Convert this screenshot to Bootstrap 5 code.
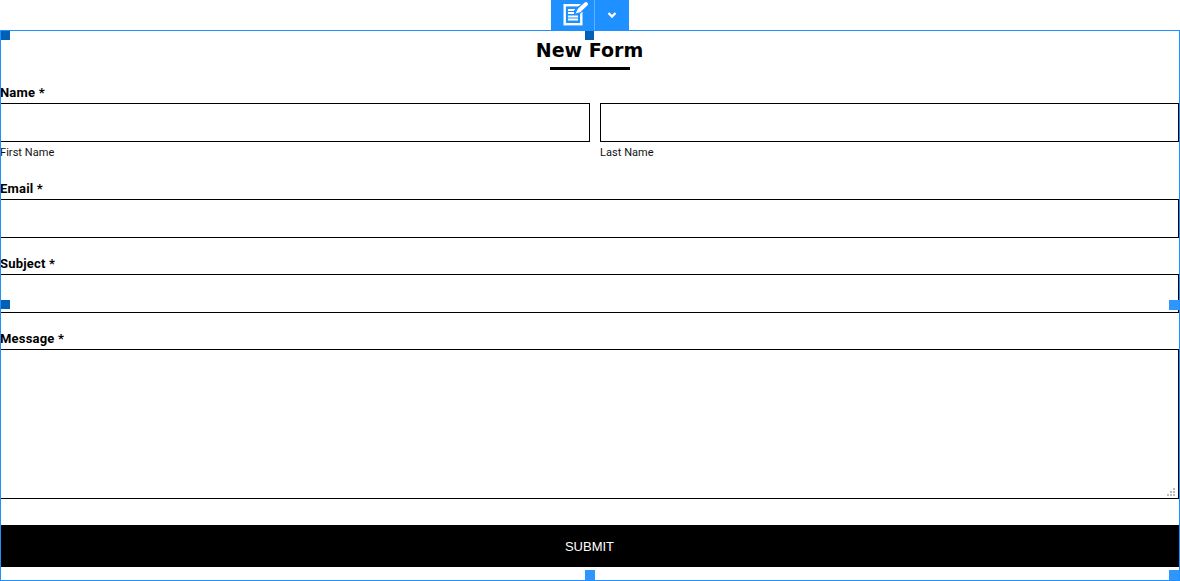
<!DOCTYPE html>
<html lang="en">
<head>
<meta charset="utf-8">
<title>New Form</title>
<link href="https://cdn.jsdelivr.net/npm/bootstrap@5.3.0/dist/css/bootstrap.min.css" rel="stylesheet">
<style>
html,body{height:581px;overflow:hidden;background:#fff}
body{font-family:"Roboto","Liberation Sans",sans-serif;color:#000}
.tool-strip{height:30px}
.tool-btn{height:30px;background:#1e90ff;border:0;padding:0;border-radius:0;display:flex;align-items:center;justify-content:center}
.tool-main{width:44px;border-right:1px solid #62b1ff}
.tool-more{width:34px}
.form-frame{position:relative;height:551px;padding-right:1px}
.form-frame::after{content:"";position:absolute;inset:0;border:1px solid #1e90ff;pointer-events:none}
.form-title{font-family:"DejaVu Sans",sans-serif;font-weight:700;font-size:19px;line-height:26px;margin:0;padding-top:7px}
.title-rule{width:80px;height:3px;background:#000;margin:4px auto 0}
.lbl{display:block;font-size:13px;font-weight:700;line-height:18px;margin:0 0 1px;letter-spacing:.2px}
.sublbl{display:block;font-size:11px;line-height:16px;margin-top:3px;letter-spacing:.05px;color:#111}
.fld{display:block;width:100%;height:39px;border:1px solid #000;border-radius:0;background:#fff;padding:0 8px;outline:0}
.fld-area{height:150px;resize:none}
.area-wrap{position:relative}
.area-grip{position:absolute;right:4px;bottom:3px}
.name-row{margin-top:14px}
.fname{flex:0 0 590px}
.lname{flex:1 1 auto;margin-left:10px}
.mt-email{margin-top:19px}
.mt-sub{margin-top:17px}
.mt-area{margin-top:17px}
.send-btn{display:block;width:100%;height:42px;margin-top:26px;padding:1px 0 0;background:#000;color:#fff;border:0;border-radius:0;font-family:"Liberation Sans",sans-serif;font-size:13px;text-transform:uppercase}
.grip{position:absolute;z-index:2}
.grip-dark{background:#0060b6;width:9px;height:9px}
.grip-light{background:#2f96ff;width:10px;height:10px}
.g-tl{left:1px;top:1px}
.g-tc{left:585px;top:1px}
.g-ml{left:1px;top:270px}
.g-mr{right:1px;top:270px}
.g-bc{left:585px;bottom:1px}
.g-br{right:1px;bottom:1px}
</style>
</head>
<body>
<div class="tool-strip d-flex justify-content-center">
  <button class="tool-btn tool-main" type="button" aria-label="Form">
    <svg width="32" height="30" viewBox="0 0 32 30" fill="none">
      <rect x="7.700" y="5.200" width="16.600" height="19" stroke="#fff" stroke-width="2.400"/>
      <path d="M11 10h7M11 13h6M11 16.500h10M11 19.500h10" stroke="#fff" stroke-width="2"/>
      <path d="M19 13L29 4" stroke="#1e90ff" stroke-width="6.500"/>
      <path d="M22.500 10L29 4" stroke="#fff" stroke-width="4" stroke-linecap="round"/>
      <path d="M18.500 13.500l2.500-4.500 3 3z" fill="#fff"/>
    </svg>
  </button>
  <button class="tool-btn tool-more" type="button" aria-label="More">
    <svg width="10" height="8" viewBox="0 0 10 8" fill="none"><path d="M1.500 2l3.500 3.500L8.500 2" stroke="#fff" stroke-width="2.400"/></svg>
  </button>
</div>
<form class="form-frame">
  <h1 class="form-title text-center">New Form</h1>
  <div class="title-rule"></div>
  <div class="name-row">
    <label class="lbl">Name *</label>
    <div class="d-flex">
      <div class="fname"><input class="fld" type="text"><span class="sublbl">First Name</span></div>
      <div class="lname"><input class="fld" type="text"><span class="sublbl">Last Name</span></div>
    </div>
  </div>
  <div class="mt-email"><label class="lbl">Email *</label><input class="fld" type="email"></div>
  <div class="mt-sub"><label class="lbl">Subject *</label><input class="fld" type="text"></div>
  <div class="mt-area"><label class="lbl">Message *</label>
    <div class="area-wrap">
      <textarea class="fld fld-area"></textarea>
      <svg class="area-grip" width="8" height="8" viewBox="0 0 8 8" fill="#bdbdbd"><rect x="6" y="0" width="2" height="2"/><rect x="3" y="3" width="2" height="2"/><rect x="6" y="3" width="2" height="2"/><rect x="0" y="6" width="2" height="2"/><rect x="3" y="6" width="2" height="2"/><rect x="6" y="6" width="2" height="2"/></svg>
    </div>
  </div>
  <button class="send-btn" type="button">Submit</button>
  <span class="grip grip-dark g-tl"></span>
  <span class="grip grip-dark g-tc"></span>
  <span class="grip grip-dark g-ml"></span>
  <span class="grip grip-light g-mr"></span>
  <span class="grip grip-light g-bc"></span>
  <span class="grip grip-light g-br"></span>
</form>
</body>
</html>
